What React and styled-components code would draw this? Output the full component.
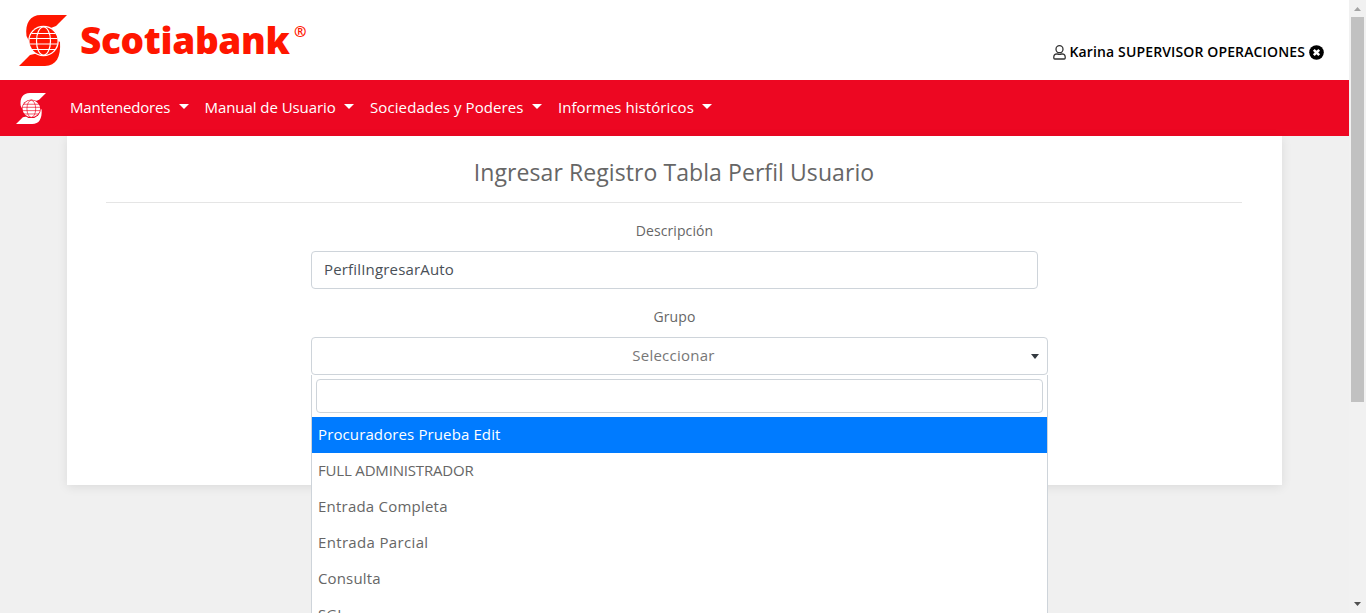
import React from "react";
import styled, { createGlobalStyle } from "styled-components";

const GlobalStyle = createGlobalStyle`
  * { box-sizing: border-box; }
  html, body { margin: 0; height: 613px; overflow: hidden; }
  body { background: #f0f0f0; color: #666; font-family: "Open Sans", "Noto Sans", sans-serif; font-size: 15px; line-height: 24px; }
`;

const Window = styled.div`display: flex; width: 1366px; height: 613px; overflow: hidden;`;
const Page = styled.div`width: 1349px; height: 613px; overflow: hidden;`;
const Header = styled.header`
  height: 80px; background: #fff; display: flex; justify-content: space-between; padding: 0 25px 0 19px;
`;
const Brand = styled.div`display: flex; align-items: flex-start; padding-top: 15px; color: #ff1600;`;
const BrandName = styled.span`
  margin: 3px 0 0 13px; font: 800 37px/44px "Open Sans", sans-serif; letter-spacing: -0.35px;
  white-space: nowrap; width: 212px;
`;
const Registered = styled.span`font: 700 15px/16px "Open Sans", sans-serif; margin: 8px 0 0 2px;`;
const User = styled.div`
  display: flex; align-items: center; height: 24px; margin-top: 40px; color: #000;
  font-weight: 600; font-size: 14px;
`;
const Label = styled.span`white-space: nowrap; letter-spacing: ${p => p.$spacing || 0}px; margin: ${p => p.$margin || 0};`;
const Nav = styled.nav`height: 56px; background: #ed0722; display: flex; align-items: center; padding-left: 16px; color: #fff;`;
const NavItems = styled.div`display: flex; margin-left: 24px; padding-bottom: 2px;`;
const NavItem = styled.div`
  display: flex; align-items: center; width: ${p => p.$width}px; height: 24px; font-weight: 500;
`;
const NavCaret = styled.i`
  border: 5px solid transparent; border-top-color: #fff; border-bottom: 0; margin: -1px 16px 0 auto;
`;
const Card = styled.main`
  width: 1215px; height: 349px; margin: 0 67px; padding: 0 40px 0 39px; background: #fff;
  box-shadow: 0 2px 10px rgba(0,0,0,.09); text-align: center;
`;
const Title = styled.h1`
  margin: 0; padding-top: 22px; height: 67px; font: 400 23px/29px "Open Sans", sans-serif;
  letter-spacing: 0.08px; border-bottom: 1px solid #e5e5e5;
`;
const Form = styled.div`width: 727px; margin: 16px 0 0 205px;`;
const FieldLabel = styled.div`height: 24px; font-size: 14px; letter-spacing: 0.1px; white-space: nowrap;`;
const Input = styled.div`
  height: 38px; margin: 8px 0 16px; padding: 5px 12px 7px; border: 1px solid #ced4da; border-radius: 4px;
  color: #495057; text-align: left;
`;
const Select = styled.div`
  position: relative; width: 737px; height: 38px; margin-top: 8px; padding: 5px 12px;
  border: 1px solid #ced4da; border-radius: 4px; color: #777; display: flex; align-items: center;
`;
const SelectValue = styled.div`flex: 1; text-align: center; padding: 0 8px 2px 0;`;
const SelectCaret = styled.i`border: 4px solid transparent; border-top: 5px solid #343a40; border-bottom: 0; margin-right: -4px;`;
const Menu = styled.div`
  position: absolute; z-index: 2; top: 37px; left: -1px; width: 737px; height: 300px; background: #fff;
  border: 1px solid #ced4da; border-top: 0; padding-top: 4px; color: #666; text-align: left;
`;
const Search = styled.div`height: 34px; margin: 0 4px 4px; border: 1px solid #ced4da; border-radius: 4px;`;
const Option = styled.div`
  height: 36px; padding: 5px 6px 7px; color: ${p => p.$active ? "#fff" : "#666"};
  background: ${p => p.$active ? "#007bff" : "#fff"}; font-weight: ${p => p.$active ? 500 : 400};
`;
const Scrollbar = styled.div`
  width: 17px; height: 613px; background: #f1f1f1; display: flex; flex-direction: column; align-items: center;
`;
const Thumb = styled.div`width: 13px; height: 385px; margin-bottom: auto; background: #c1c1c1;`;
const Arrow = styled.svg`width: 17px; height: 17px; flex: none;`;

const Emblem = ({ width, height, color, ground, line = 1.2 }) => (
  <svg width={width} height={height} viewBox="0 0 48 51" preserveAspectRatio="none">
    <path d="M48 0H22C11 0 6 8 7.500 21L10 26L24 16L37 11ZM0 51H26C37 51 42 42 41 27L38 25L24 37L11 40Z" fill={color} />
    <circle cx="24.500" cy="26" r="15.300" fill={ground} />
    <circle cx="24.500" cy="26" r="14" fill={color} />
    <g fill="none" stroke={ground} strokeWidth={line}>
      <path d="M12.500 18.500H36.500M10.500 23.500H38.500M10.500 29H38.500M12.500 34.500H36.500" />
      <ellipse cx="24.500" cy="26" rx="7" ry="14" />
    </g>
  </svg>
);

const menus = [
  ["Mantenedores", 134.5, -0.17],
  ["Manual de Usuario", 165.5, -0.06],
  ["Sociedades y Poderes", 188, 0.1],
  ["Informes históricos", 170, 0.06],
];
const options = [
  ["Procuradores Prueba Edit", 0.12], ["FULL ADMINISTRADOR", -0.18], ["Entrada Completa", 0.22],
  ["Entrada Parcial", 0.34], ["Consulta", 0.15], ["SGL", 0],
];

export default function App() {
  return (
    <Window>
      <GlobalStyle />
      <Page>
        <Header>
          <Brand>
            <Emblem width={48} height={51} color="#ff1600" ground="#fff" />
            <BrandName>Scotiabank</BrandName><Registered>®</Registered>
          </Brand>
          <User>
            <svg width="13" height="15" viewBox="0 0 13 15" fill="none" stroke="#333" strokeWidth="1.300">
              <circle cx="6.500" cy="4.200" r="3.500" />
              <path d="M4 8.800C2 8.800.8 10.200.8 12v1q0 1 1 1h9.400q1 0 1-1v-1c0-1.800-1.200-3.200-3.200-3.200-1.500.6-3.500.6-5 0Z" />
            </svg>
            <Label $margin="0 4px 0 4px" $spacing={0.13}>Karina SUPERVISOR OPERACIONES</Label>
            <svg width="15" height="15" viewBox="0 0 15 15">
              <circle cx="7.500" cy="7.500" r="7.300" fill="#000" />
              <path d="M4.800 4.800l5.400 5.400M10.200 4.800l-5.400 5.400" stroke="#fff" strokeWidth="2.500" />
            </svg>
          </User>
        </Header>
        <Nav>
          <Emblem width={30} height={31} color="#fff" ground="#ed0722" line={1.1} />
          <NavItems>
            {menus.map(([name, width, spacing]) => (
              <NavItem key={name} $width={width}><Label $spacing={spacing}>{name}</Label><NavCaret /></NavItem>
            ))}
          </NavItems>
        </Nav>
        <Card>
          <Title>Ingresar Registro Tabla Perfil Usuario</Title>
          <Form>
            <FieldLabel>Descripción</FieldLabel>
            <Input><Label $spacing={0.17}>PerfilIngresarAuto</Label></Input>
            <FieldLabel>Grupo</FieldLabel>
            <Select>
              <SelectValue><Label $spacing={0.25}>Seleccionar</Label></SelectValue>
              <SelectCaret />
              <Menu>
                <Search />
                {options.map(([name, spacing], i) => (
                  <Option key={name} $active={i === 0}><Label $spacing={spacing}>{name}</Label></Option>
                ))}
              </Menu>
            </Select>
          </Form>
        </Card>
      </Page>
      <Scrollbar>
        <Arrow viewBox="0 0 17 17"><path d="M5 11L8.500 7L12 11Z" fill="#a3a3a3" /></Arrow>
        <Thumb />
        <Arrow viewBox="0 0 17 17"><path d="M5 6L8.500 10L12 6Z" fill="#505050" /></Arrow>
      </Scrollbar>
    </Window>
  );
}
